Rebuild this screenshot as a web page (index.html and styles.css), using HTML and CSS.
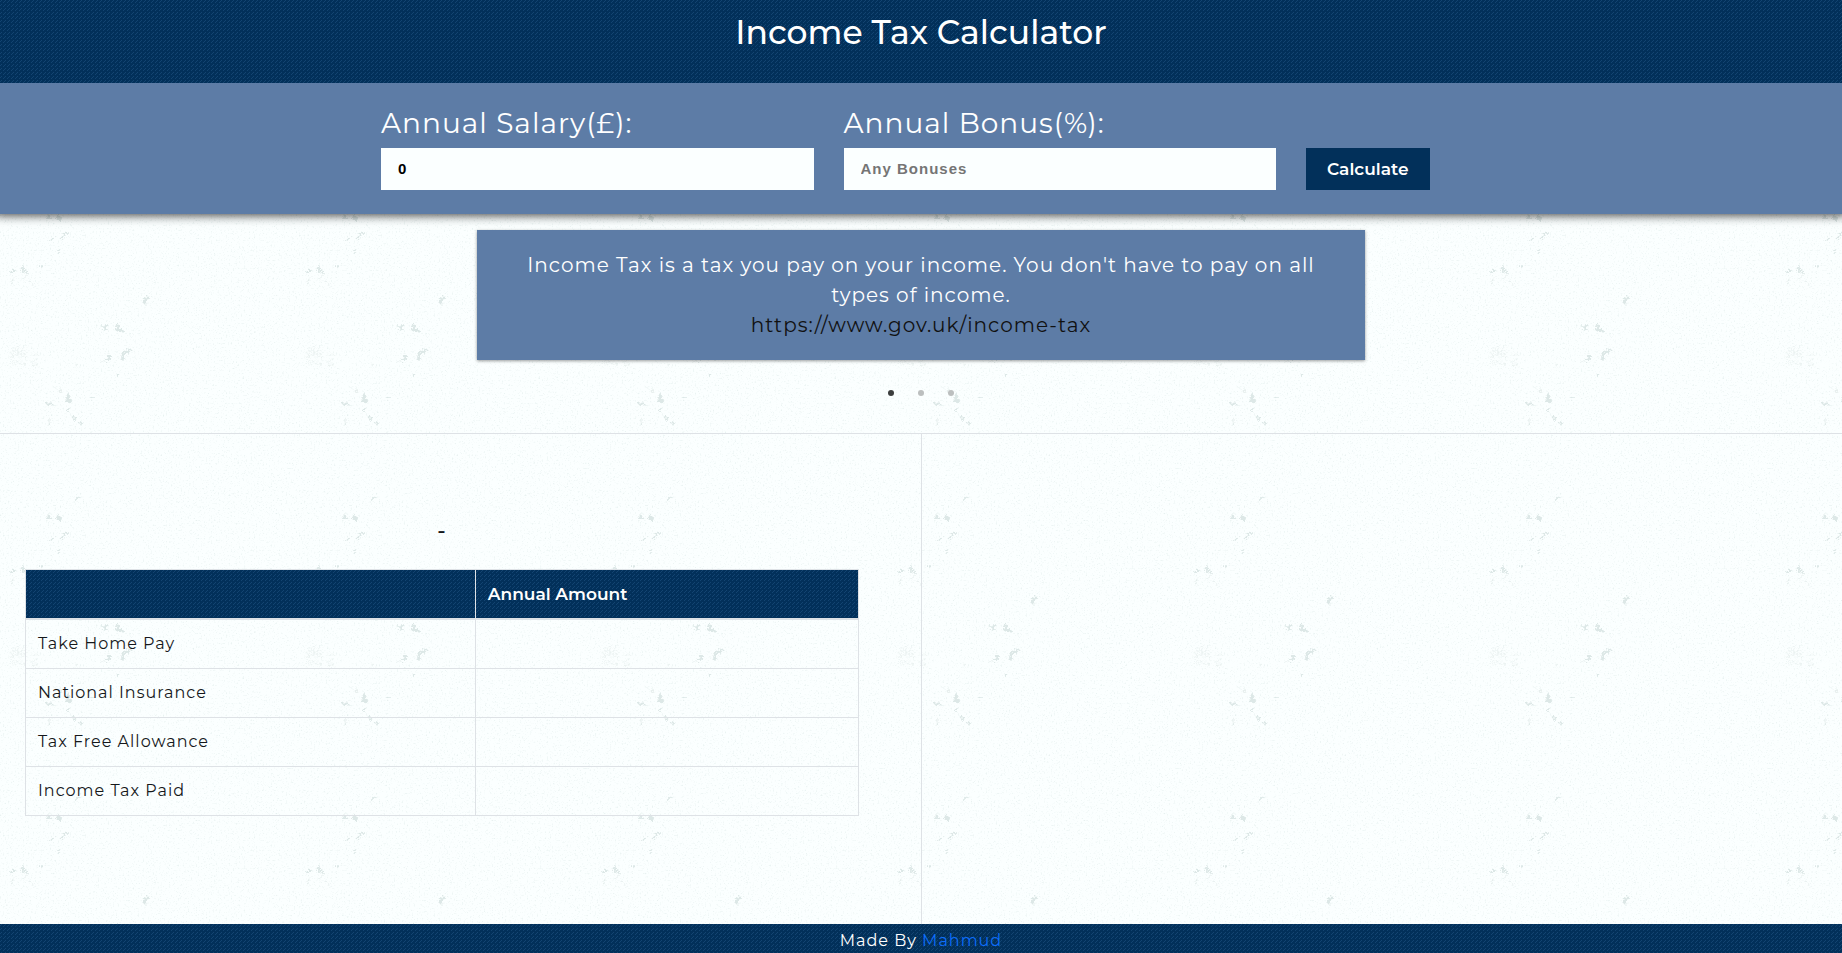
FILE: index.html
```html
<!DOCTYPE html>
<html lang="en">
<head>
<meta charset="utf-8">
<meta name="viewport" content="width=device-width, initial-scale=1">
<title>Income Tax Calculator</title>
<link rel="stylesheet" href="styles.css">
</head>
<body>
<header class="site-header">
  <h1 class="site-title">Income Tax Calculator</h1>
</header>
<form class="tax-form">
  <div class="form-row">
    <div class="field">
      <label class="field-label" for="salary">Annual Salary(£):</label>
      <input class="field-input" id="salary" type="text" value="0">
    </div>
    <div class="field">
      <label class="field-label" for="bonus">Annual Bonus(%):</label>
      <input class="field-input" id="bonus" type="text" placeholder="Any Bonuses">
    </div>
    <button class="calculate" type="button">Calculate</button>
  </div>
</form>
<section class="info">
  <div class="info-card">
    <p class="info-text">Income Tax is a tax you pay on your income. You don't have to pay on all types of income.</p>
    <a class="info-link" href="https://www.gov.uk/income-tax">https://www.gov.uk/income-tax</a>
  </div>
  <div class="dots">
    <button class="dot dot-active" type="button" aria-label="Slide 1"></button>
    <button class="dot" type="button" aria-label="Slide 2"></button>
    <button class="dot" type="button" aria-label="Slide 3"></button>
  </div>
</section>
<main class="results">
  <section class="summary">
    <p class="summary-title">-</p>
    <table class="tax-table">
      <thead>
        <tr><th class="name-col"></th><th>Annual Amount</th></tr>
      </thead>
      <tbody>
        <tr><td>Take Home Pay</td><td></td></tr>
        <tr><td>National Insurance</td><td></td></tr>
        <tr><td>Tax Free Allowance</td><td></td></tr>
        <tr><td>Income Tax Paid</td><td></td></tr>
      </tbody>
    </table>
  </section>
  <section class="chart"></section>
</main>
<footer class="site-footer">Made By <a class="author" href="#">Mahmud</a></footer>
</body>
</html>
```

FILE: styles.css
```css
:root {
  --navy: #02305a;
  --blue: #5d7ca6;
  --paper: #fbffff;
  --line: #dee2e6;
  --weave: url("data:image/svg+xml,%3Csvg xmlns='http://www.w3.org/2000/svg' width='4' height='4' shape-rendering='crispEdges'%3E%3Cg fill='%23134471'%3E%3Crect x='1' y='0' width='1' height='1'/%3E%3Crect x='0' y='1' width='1' height='1'/%3E%3Crect x='3' y='2' width='1' height='1'/%3E%3C/g%3E%3C/svg%3E");
  --grain: url("data:image/svg+xml,%3Csvg xmlns='http://www.w3.org/2000/svg' width='296' height='300'%3E%3Cfilter id='n' x='0' y='0' width='100%25' height='100%25'%3E%3CfeTurbulence type='fractalNoise' baseFrequency='.6' numOctaves='2' seed='4' stitchTiles='stitch'/%3E%3CfeColorMatrix values='0 0 0 0 .8 0 0 0 0 .88 0 0 0 0 .87 3 0 0 0 -1.7'/%3E%3C/filter%3E%3Cfilter id='r' filterUnits='userSpaceOnUse' x='0' y='0' width='296' height='300'%3E%3CfeTurbulence type='fractalNoise' baseFrequency='.4' numOctaves='2' seed='7'/%3E%3CfeDisplacementMap in='SourceGraphic' scale='7' xChannelSelector='R' yChannelSelector='G'/%3E%3C/filter%3E%3Crect width='296' height='300' filter='url(%23n)'/%3E%3Cg filter='url(%23r)' fill='none' stroke-linecap='round'%3E%3Cg stroke='%23dde8e7'%3E%3Cpath stroke-width='4' d='M117 26l1 3 4 2M107 60l2-3M58 217l2 2M68 97l1 5'/%3E%3Cpath stroke-width='3' d='M122 59l2-6 6-3M144 303l4-6M144 3l3-5M48 216l2 1M47 104h5'/%3E%3Cpath stroke-width='2' d='M103 26l4 3M107 25l-3 4M51 240l2-3M61 239l5-6M77 199l2-2M59 250v1M10 271h5M23 267v4l5 1M41 266v1M68 109v3M73 117l2 3M80 122l1 2M92 98h1M118 75v1M50 124v1'/%3E%3C/g%3E%3Cg stroke='%23e5edec'%3E%3Cpath stroke-width='1' d='M14 278l-3 7M25 276v3M29 280l1 2M33 283v1M50 118v8M58 91l4 1M76 64l1 4M103 60v2'/%3E%3Cpath stroke-dasharray='1 2' d='M14 48h11M11 51h13M12 54h14M10 57h16M12 61h12M31 55h7M33 60h5M12 64h13M33 64h4'/%3E%3C/g%3E%3C/g%3E%3C/svg%3E");
}

* {
  box-sizing: border-box;
}

body {
  margin: 0;
  min-height: 100vh;
  display: flex;
  flex-direction: column;
  background: var(--paper) var(--grain) 0 0 / 296px 300px;
  color: #15181b;
  font-family: Montserrat, Inter, "Open Sans", sans-serif;
  font-size: 16px;
  line-height: 24px;
  letter-spacing: 1px;
}

.site-header {
  position: relative;
  z-index: 1;
  padding: 11px 15px 30px;
  background: var(--navy) var(--weave);
  color: #fff;
  text-align: center;
}

.site-title {
  margin: 0;
  font-size: 33px;
  line-height: 42px;
  font-weight: 500;
  letter-spacing: 0;
}

.tax-form {
  padding: 19px 15px 24px;
  background: var(--blue);
  box-shadow: 0 -4px 10px 5px rgba(0, 0, 0, 0.8);
}

.form-row {
  display: grid;
  grid-template-columns: 5fr 5fr 2fr;
  max-width: 1110px;
  margin: 0 auto;
  align-items: end;
}

.field {
  display: flex;
  flex-direction: column;
  gap: 4px;
  padding: 0 15px;
}

.field-label {
  color: #fff;
  font-size: 28px;
  line-height: 42px;
  font-weight: 400;
}

.field-input {
  width: 100%;
  height: 42px;
  padding: 0 17px 2px;
  border: 0;
  border-radius: 0;
  background: var(--paper);
  color: #000;
  font: bold 15px "Liberation Sans", Arial, sans-serif;
  letter-spacing: 1px;
}

.field-input::placeholder {
  color: #757575;
}

.calculate {
  justify-self: start;
  height: 42px;
  margin-left: 15px;
  padding: 0 21px;
  border: 0;
  background: #02305a;
  color: #fff;
  font: 600 17px Montserrat, Inter, sans-serif;
}

.info {
  padding: 16px 15px 37px;
  border-bottom: 1px solid var(--line);
}

.info-card {
  max-width: 888px;
  margin: 0 auto;
  padding: 20px 40px;
  background: var(--blue);
  box-shadow: 0 1px 3px rgba(0, 0, 0, 0.4);
  color: #fff;
  font-size: 20px;
  line-height: 30px;
  text-align: center;
}

.info-text {
  margin: 0;
}

.info-link {
  color: #111;
  text-decoration: none;
}

.dots {
  display: flex;
  justify-content: center;
  gap: 24px;
  margin-top: 30px;
}

.dot {
  width: 6px;
  height: 6px;
  padding: 0;
  border: 0;
  border-radius: 50%;
  background: #bcbfbf;
}

.dot-active {
  background: #3c3d3d;
}

.results {
  flex: 1;
  display: grid;
  grid-template-columns: 1fr 1fr;
}

.summary {
  padding: 85px 62px 0 25px;
}

.summary-title {
  margin: 0 0 26px;
  font-size: 22px;
  font-weight: 500;
  text-align: center;
}

.chart {
  border-left: 1px solid var(--line);
}

.tax-table {
  width: 100%;
  border-collapse: collapse;
  text-align: left;
}

.tax-table th,
.tax-table td {
  height: 49px;
  padding: 12px;
  border: 1px solid var(--line);
}

.tax-table th {
  border-bottom-width: 2px;
  color: #fff;
  font-size: 17px;
  font-weight: 600;
  letter-spacing: 0;
}

.tax-table thead {
  background: var(--navy) var(--weave);
}

.tax-table .name-col {
  width: 54%;
}

.site-footer {
  padding: 5px 0 0;
  background: var(--navy) var(--weave);
  color: #fff;
  text-align: center;
}

.author {
  color: #0d6efd;
  text-decoration: none;
}
```
